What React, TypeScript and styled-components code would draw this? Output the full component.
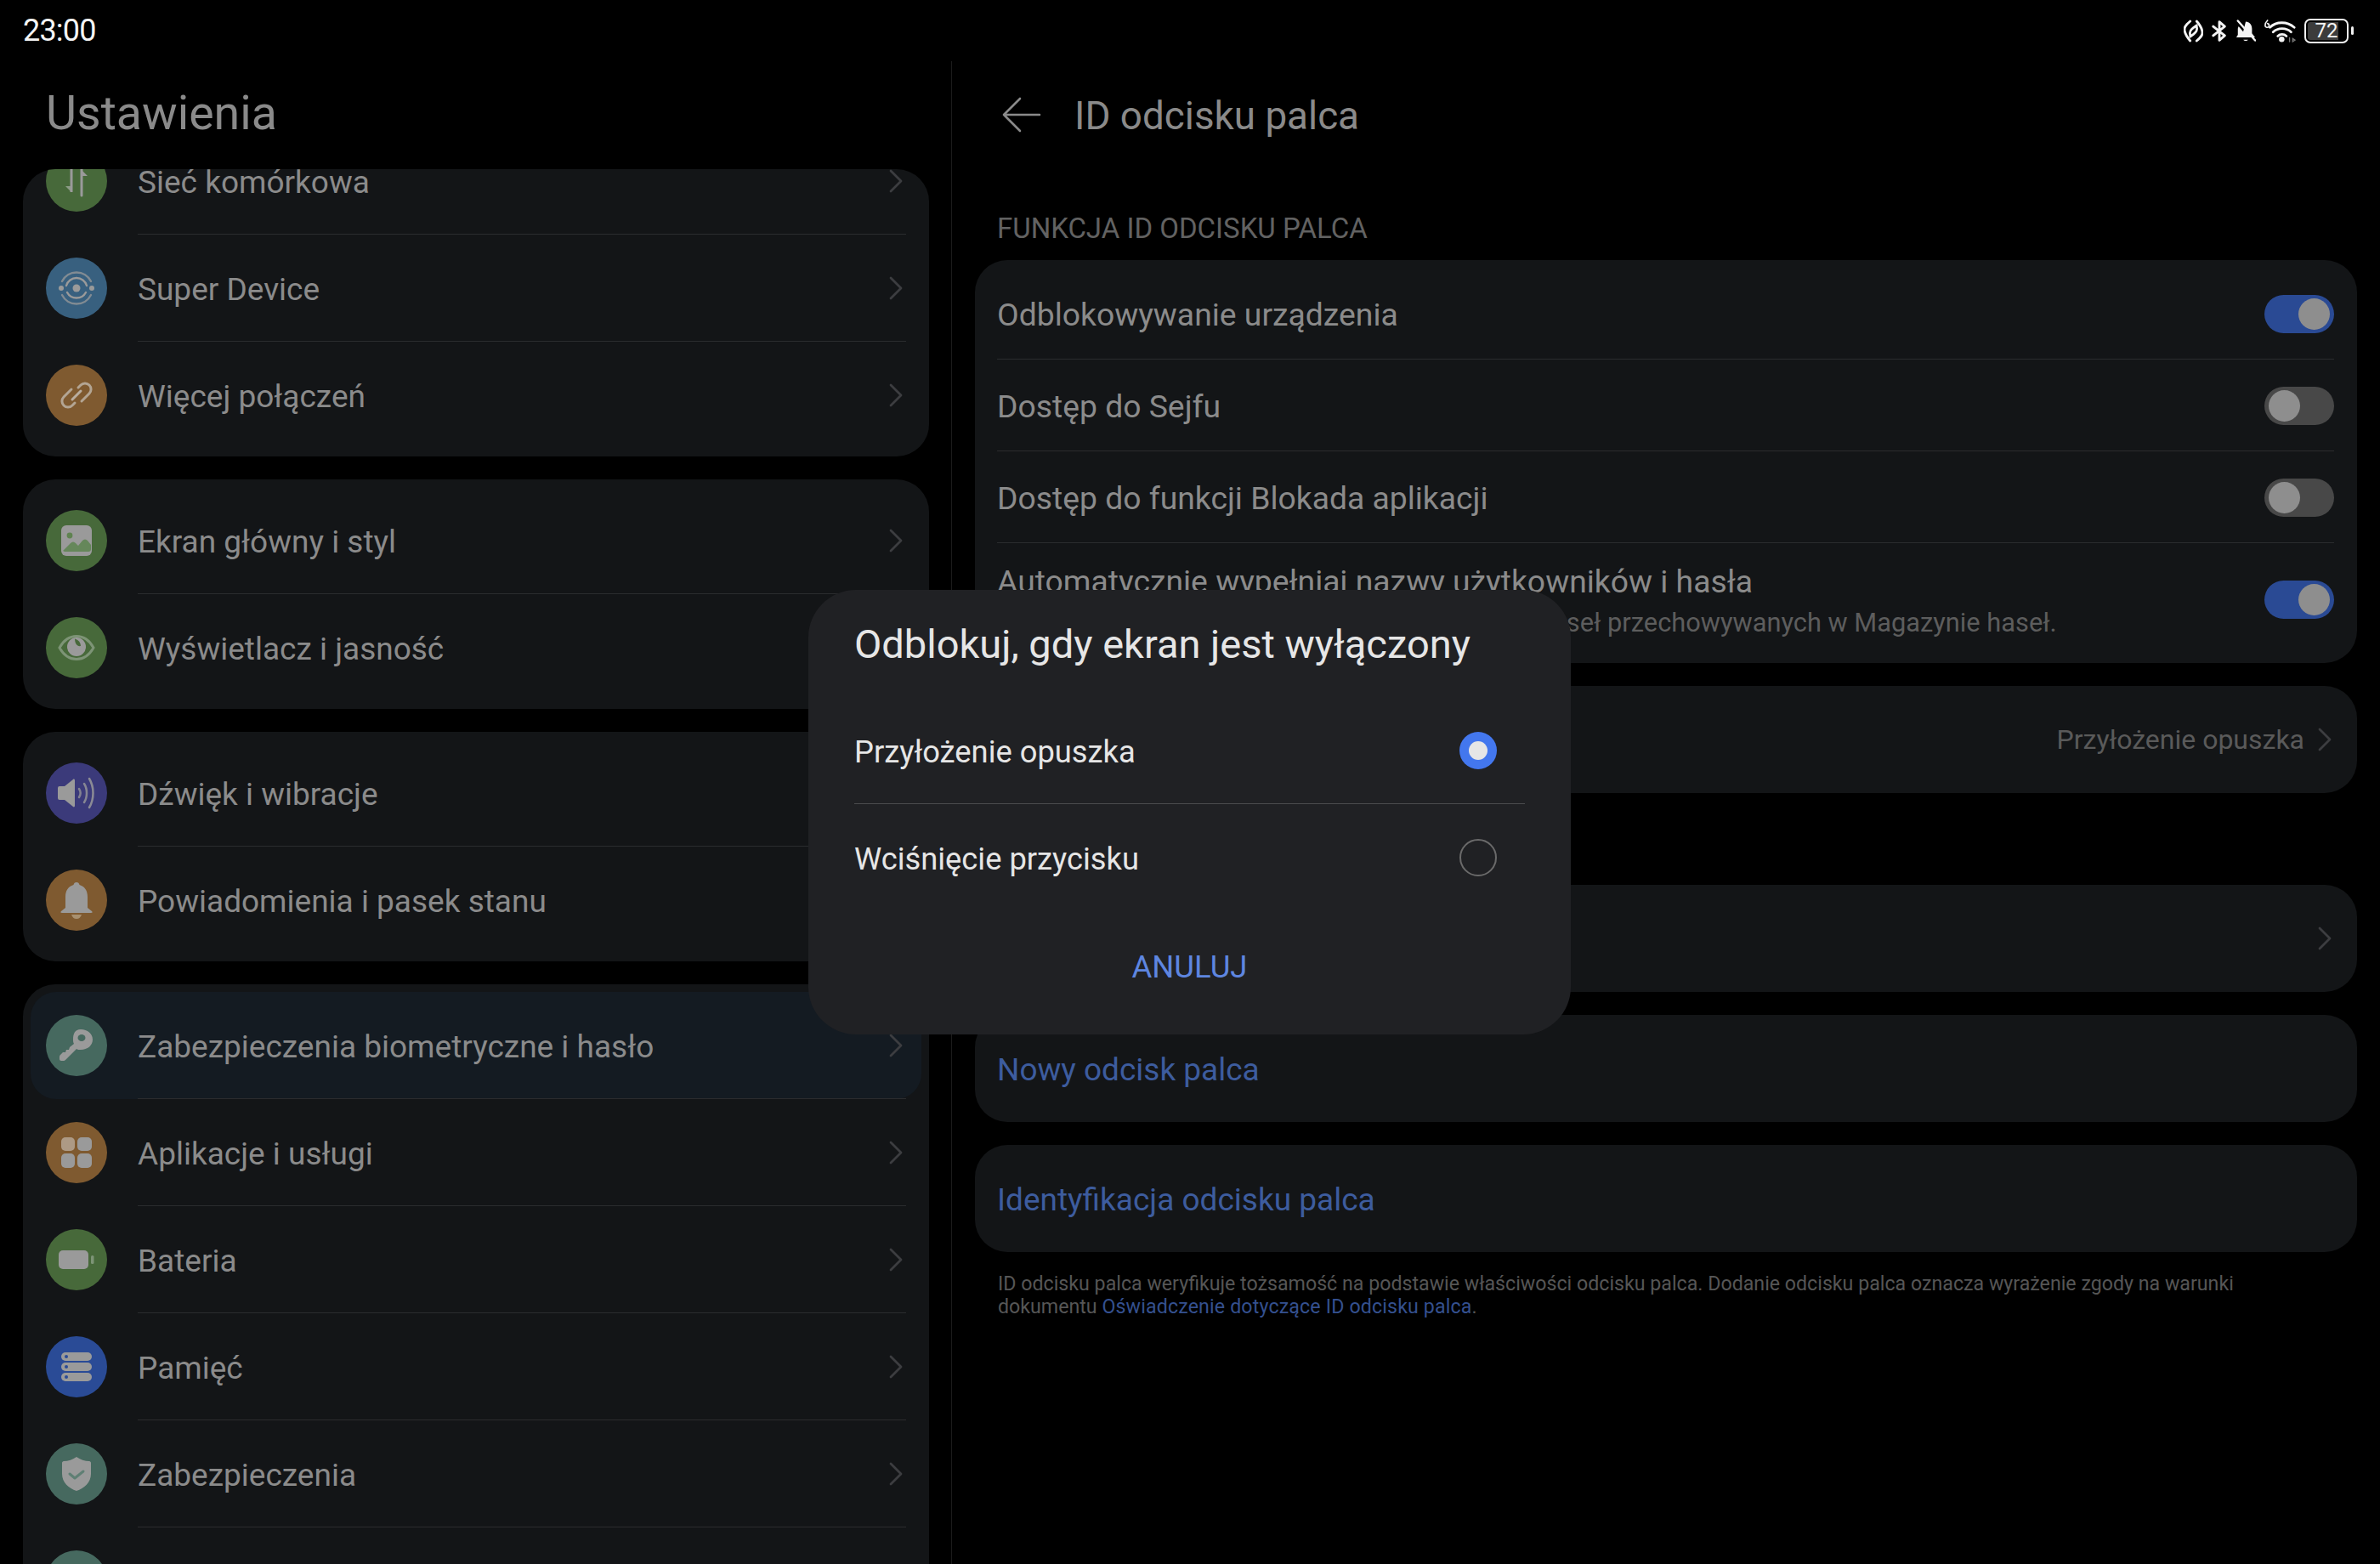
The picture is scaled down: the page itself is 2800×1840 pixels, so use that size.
import React from 'react'
import styled, { createGlobalStyle } from 'styled-components'

const GlobalStyle = createGlobalStyle`
  html, body {
    margin: 0;
    padding: 0;
    background: #000;
  }
  * {
    box-sizing: border-box;
  }
`

const Screen = styled.div`
  position: relative;
  width: 2800px;
  height: 1840px;
  overflow: hidden;
  background: #000;
  font-family: Roboto, "Noto Sans", "Liberation Sans", sans-serif;
`
const StatusBar = styled.div`
  display: flex;
  align-items: center;
  justify-content: space-between;
  height: 72px;
  padding: 0 27px;
`
const Clock = styled.span`
  color: #f4f4f4;
  font-size: 36px;
  letter-spacing: -0.8px;
`
const Panes = styled.div`
  display: flex;
  height: 1768px;
`
const LeftPane = styled.div`
  display: flex;
  flex-direction: column;
  width: 1120px;
  padding: 0 26px 0 27px;
  border-right: 1px solid #1c1c1c;
`
const LeftTitle = styled.div`
  display: flex;
  align-items: center;
  height: 127px;
  padding: 0 27px 4px;
  color: #8a8a8a;
  font-size: 55.5px;
`
const ScrollArea = styled.div`
  flex: 1;
  overflow: hidden;
  border-radius: 38px 38px 0 0;
`
const ScrollInner = styled.div`
  display: flex;
  flex-direction: column;
  gap: 27px;
  margin-top: -58px;
`
const MenuCard = styled.div`
  padding: 9px;
  border-radius: 38px;
  background: #131517;
`
const MenuRow = styled.div<{ $active?: boolean }>`
  display: flex;
  align-items: center;
  height: 126px;
  padding-left: 18px;
  border-radius: 30px;
  background: ${(p) => (p.$active ? '#141b22' : 'transparent')};
`
const IconDisc = styled.div<{ $color: string }>`
  display: flex;
  flex-shrink: 0;
  align-items: center;
  justify-content: center;
  width: 72px;
  height: 72px;
  border-radius: 50%;
  background: ${(p) => p.$color};
`
const MenuBody = styled.div<{ $last?: boolean }>`
  display: flex;
  flex: 1;
  align-items: center;
  justify-content: space-between;
  align-self: stretch;
  margin: 0 18px 0 36px;
  padding-right: 4px;
  border-bottom: ${(p) => (p.$last ? 'none' : '1px solid #2b2c2e')};
`
const MenuLabel = styled.span`
  padding-top: 3px;
  color: #8b8b8b;
  font-size: 37px;
`
const Chevron = styled.svg`
  display: block;
  flex-shrink: 0;
  width: 16px;
  height: 28px;
`
const RightPane = styled.div`
  display: flex;
  flex: 1;
  flex-direction: column;
  padding: 0 27px;
`
const Header = styled.div`
  display: flex;
  align-items: center;
  gap: 39px;
  height: 126px;
  padding-left: 32px;
`
const HeaderTitle = styled.span`
  padding-top: 2px;
  color: #8a8a8a;
  font-size: 45.8px;
`
const SectionLabel = styled.div`
  display: flex;
  align-items: center;
  height: 108px;
  padding: 32px 26px 0;
  color: #626262;
  font-size: 33px;
`
const Stack = styled.div`
  display: flex;
  flex-direction: column;
  gap: 27px;
`
const SettingsCard = styled.div<{ $gapTop?: number }>`
  padding: 9px 27px 9px 26px;
  border-radius: 38px;
  background: #131517;
  margin-top: ${(p) => p.$gapTop ?? 0}px;
`
const SettingRow = styled.div<{ $tall?: boolean; $last?: boolean }>`
  display: flex;
  align-items: center;
  justify-content: space-between;
  height: ${(p) => (p.$tall ? 132 : 108)}px;
  padding-top: 1px;
  border-bottom: ${(p) => (p.$last ? 'none' : '1px solid #2b2c2e')};
`
const PlainRow = styled.div`
  display: flex;
  align-items: center;
  justify-content: space-between;
  height: 108px;
`
const SettingText = styled.div`
  display: flex;
  flex-direction: column;
  gap: 8px;
`
const SettingLabel = styled.span`
  padding-top: 2px;
  color: #8b8b8b;
  font-size: 37.3px;
`
const SettingHint = styled.span`
  color: #5d5d5d;
  font-size: 30.8px;
`
const SettingValue = styled.div`
  display: flex;
  align-items: center;
  gap: 16px;
  margin-right: 3px;
  color: #5a5a5a;
  font-size: 32px;
`
const ActionLabel = styled.span`
  padding-top: 3px;
  color: #3d5c9e;
  font-size: 37px;
`
const Toggle = styled.div<{ $on?: boolean }>`
  display: flex;
  flex-shrink: 0;
  align-items: center;
  justify-content: ${(p) => (p.$on ? 'flex-end' : 'flex-start')};
  width: 82px;
  height: 45px;
  padding: 0 5px;
  border-radius: 23px;
  background: ${(p) => (p.$on ? '#2a4a94' : '#484848')};
`
const ToggleKnob = styled.div`
  width: 37px;
  height: 37px;
  border-radius: 50%;
  background: #8e8e8e;
`
const Footnote = styled.div`
  margin-top: 24px;
  padding: 0 26px 0 27px;
  color: #565656;
  font-size: 23.2px;
  line-height: 27px;
`
const FootLink = styled.span`
  color: #34508f;
  letter-spacing: 0.14px;
`
const Dialog = styled.div`
  position: absolute;
  top: 694px;
  left: 951px;
  display: flex;
  flex-direction: column;
  width: 897px;
  height: 523px;
  padding: 0 54px;
  border-radius: 56px;
  background: #202124;
`
const DialogTitle = styled.div`
  display: flex;
  align-items: center;
  height: 126px;
  color: #e6e6e6;
  font-size: 47px;
`
const DialogOption = styled.div<{ $last?: boolean }>`
  display: flex;
  align-items: center;
  justify-content: space-between;
  height: 126px;
  padding-top: 3px;
  padding-right: 33px;
  border-bottom: ${(p) => (p.$last ? 'none' : '1px solid #4a4b4d')};
  color: #e6e6e6;
  font-size: 36.3px;
`
const Radio = styled.div<{ $on?: boolean }>`
  display: flex;
  align-items: center;
  justify-content: center;
  width: 44px;
  height: 44px;
  margin-top: -3px;
  border-radius: 50%;
  border: ${(p) => (p.$on ? 'none' : '2px solid #6a6a6a')};
  background: ${(p) => (p.$on ? '#4377ee' : 'transparent')};
`
const RadioDot = styled.div`
  width: 22px;
  height: 22px;
  border-radius: 50%;
  background: #e6e6e6;
`
const CancelButton = styled.div`
  display: flex;
  align-items: center;
  justify-content: center;
  height: 130px;
  color: #5e86e0;
  font-size: 36.5px;
`
const StatusIcons = styled.div`
  display: flex;
  align-items: center;
  gap: 10px;
  margin-right: 4px;
`
const BatteryBox = styled.div`
  position: relative;
  display: flex;
  align-items: center;
  justify-content: center;
  width: 52px;
  height: 29px;
  overflow: hidden;
  border: 2px solid #f0f0f0;
  border-radius: 7px;
  color: #f4f4f4;
  font-size: 24px;
  line-height: 1;
`
const BatteryFill = styled.div`
  position: absolute;
  top: 2px;
  bottom: 2px;
  left: 2px;
  width: 36px;
  border-radius: 3px 0 0 3px;
  background: #3c3c3c;
`
const BatteryNumber = styled.span`
  position: relative;
`
const Battery = styled.div`
  display: flex;
  align-items: center;
  gap: 3px;
`
const BatteryTip = styled.div`
  width: 3px;
  height: 10px;
  border-radius: 2px;
  background: #f0f0f0;
`

const G = '#9a9a9a'

const ChevronIcon = () => (
  <Chevron viewBox="0 0 16 28" fill="none" stroke="#3c3d40" strokeWidth="2.8" strokeLinecap="round" strokeLinejoin="round">
    <path d="M2 2l12 12L2 26" />
  </Chevron>
)

const SignalGlyph = () => (
  <svg width="44" height="44" viewBox="0 0 44 44" fill="none">
    <path d="M16 5v30l-7-7h7z" fill="#8c9c86" />
    <path d="M16 4v31" stroke={G} strokeWidth="3" />
    <path d="M28 39V9l7 7h-7z" fill={G} />
    <path d="M28 8v31" stroke={G} strokeWidth="3" strokeLinecap="round" />
  </svg>
)
const SuperDeviceGlyph = () => (
  <svg width="44" height="44" viewBox="0 0 44 44" fill="none" stroke={G} strokeLinecap="round">
    <circle cx="22" cy="22" r="4.5" fill={G} stroke="none" />
    <circle cx="4" cy="22" r="3" fill={G} stroke="none" />
    <circle cx="40" cy="22" r="3" fill={G} stroke="none" />
    <path d="M10 19a12.5 12.5 0 0 1 24 0M33 27a12.5 12.5 0 0 1-22 0" strokeWidth="2.4" />
    <path d="M5 14a19 19 0 0 1 34 0M39 30a19 19 0 0 1-34 0" strokeWidth="2.4" opacity="0.75" />
  </svg>
)
const LinkGlyph = () => (
  <svg width="44" height="44" viewBox="0 0 44 44" fill="none" stroke="#b9ad9f" strokeWidth="3" strokeLinecap="round">
    <path d="M16 15l-9 9a7 7 0 0 0 10 10l3-3" opacity="0.9" />
    <path d="M28 29l9-9a7 7 0 0 0-10-10l-3 3" opacity="0.9" />
    <path d="M17 27l10-10" />
  </svg>
)
const PictureGlyph = () => (
  <svg width="38" height="38" viewBox="0 0 38 38">
    <rect x="1" y="1" width="36" height="36" rx="6" fill={G} />
    <circle cx="11" cy="13" r="3.4" fill="#5f8350" />
    <path d="M3 31l9-9c2-2 4-2 6 0l3 3 5-6c2-2 4-2 6 0l4 5v5a3 3 0 0 1-3 3H5z" fill="#65875a" />
  </svg>
)
const EyeGlyph = () => (
  <svg width="44" height="44" viewBox="0 0 44 44" fill="none">
    <path d="M2 22C7 13 14 8.500 22 8.500S37 13 42 22c-5 9-12 13.500-20 13.500S7 31 2 22z" stroke="#7d9476" strokeWidth="3" />
    <circle cx="22" cy="21" r="11" fill={G} />
    <path d="M20 11.500a9.500 9.500 0 0 1 7 8.500c-4 1-7-3-7-8.500z" fill="#47693a" />
  </svg>
)
const SoundGlyph = () => (
  <svg width="44" height="44" viewBox="0 0 44 44" fill="none">
    <path d="M0 16a2 2 0 0 1 2-2h6l10-8c1-1 2 0 2 1v30c0 1-1 2-2 1l-10-8H2a2 2 0 0 1-2-2z" fill={G} />
    <path d="M25 17c2 3 2 7 0 10" stroke={G} strokeWidth="2.5" strokeLinecap="round" opacity="0.75" />
    <path d="M31 11c4 6 4 16 0 22" stroke={G} strokeWidth="2.5" strokeLinecap="round" opacity="0.8" />
    <path d="M37 5c6 10 6 24 0 34" stroke={G} strokeWidth="2.5" strokeLinecap="round" opacity="0.85" />
  </svg>
)
const BellGlyph = () => (
  <svg width="38" height="44" viewBox="0 0 38 44">
    <path d="M19 1c2 0 3 1 3.500 3C29 6 32 11 32 18v13l5 4c1 1 1 2-1 2H2c-2 0-2-1-1-2l5-4V18C6 11 9 6 15.500 4 16 2 17 1 19 1z" fill={G} />
    <path d="M13 39h12c-1 3-3 5-6 5s-5-2-6-5z" fill="#a8906f" />
  </svg>
)
const KeyGlyph = () => (
  <svg width="40" height="40" viewBox="0 0 40 40">
    <path d="M25 1c8 0 14 5 14 12s-6 12-14 12c-2 0-4 0-5-1L7 37c-1 1-2 1-3 1H2c-1 0-2-1-2-2v-2c0-1 0-2 1-3l3-3h3l1-3h3l1-3 5-4c-1-2-1-3-1-5C16 6 18 1 25 1z" fill={G} />
    <ellipse cx="26" cy="11" rx="4.500" ry="4" fill="#46695f" />
  </svg>
)
const AppsGlyph = () => (
  <svg width="36" height="36" viewBox="0 0 36 36">
    <rect x="0" y="0" width="16" height="16" rx="5" fill="#ad9a85" />
    <rect x="19" y="0" width="17" height="16" rx="5" fill={G} />
    <rect x="0" y="19" width="16" height="17" rx="5" fill={G} />
    <rect x="19" y="19" width="17" height="17" rx="5" fill={G} />
  </svg>
)
const BatteryGlyph = () => (
  <svg width="42" height="22" viewBox="0 0 42 22">
    <rect x="0" y="0" width="35" height="22" rx="5" fill={G} />
    <rect x="38" y="6" width="3.500" height="10" rx="1.500" fill="#7d9476" />
  </svg>
)
const StorageGlyph = () => (
  <svg width="36" height="34" viewBox="0 0 36 34">
    {[0, 12, 24].map((y) => (
      <g key={y}>
        <rect x="0" y={y} width="36" height="10" rx="5" fill={G} />
        <circle cx="6" cy={y + 5} r="2" fill="#2a4b96" />
      </g>
    ))}
  </svg>
)
const ShieldGlyph = () => (
  <svg width="34" height="40" viewBox="0 0 34 40" fill="none">
    <path d="M17 0c4 3 10 5 15 5 1 0 2 1 2 2v13c0 10-8 17-17 20C8 37 0 30 0 20V7c0-1 1-2 2-2 5 0 11-2 15-5z" fill={G} />
    <path d="M9 20l6 5 10-8" stroke="#5f7f74" strokeWidth="3" strokeLinecap="round" strokeLinejoin="round" />
  </svg>
)

type MenuItem = { label: string; color: string; glyph?: React.ReactNode; active?: boolean }

const menu: MenuItem[][] = [
  [
    { label: 'Sieć komórkowa', color: '#47693a', glyph: <SignalGlyph /> },
    { label: 'Super Device', color: '#38607f', glyph: <SuperDeviceGlyph /> },
    { label: 'Więcej połączeń', color: '#7f5a30', glyph: <LinkGlyph /> },
  ],
  [
    { label: 'Ekran główny i styl', color: '#47693a', glyph: <PictureGlyph /> },
    { label: 'Wyświetlacz i jasność', color: '#47693a', glyph: <EyeGlyph /> },
  ],
  [
    { label: 'Dźwięk i wibracje', color: '#3b3a7a', glyph: <SoundGlyph /> },
    { label: 'Powiadomienia i pasek stanu', color: '#7f5a30', glyph: <BellGlyph /> },
  ],
  [
    { label: 'Zabezpieczenia biometryczne i hasło', color: '#46695f', glyph: <KeyGlyph />, active: true },
    { label: 'Aplikacje i usługi', color: '#7f5a30', glyph: <AppsGlyph /> },
    { label: 'Bateria', color: '#47693a', glyph: <BatteryGlyph /> },
    { label: 'Pamięć', color: '#2a4b96', glyph: <StorageGlyph /> },
    { label: 'Zabezpieczenia', color: '#46695f', glyph: <ShieldGlyph /> },
    { label: '', color: '#46695f' },
  ],
]

const StatusGlyphs = () => (
  <>
    <svg width="23" height="27" viewBox="0 0 24 28" fill="none" stroke="#f4f4f4" strokeWidth="3" strokeLinecap="round">
      <path d="M8 2C2 7 0 10 1.500 15c1 4 3 7 6.500 11" />
      <path d="M16 26c6-5 8-8 6.500-13-1-4-3-7-6.500-11" />
      <path d="M8 19c-1-4 0-6 4-9l4-3M16 9c1 4 0 6-4 9l-4 3" />
    </svg>
    <svg width="18" height="27" viewBox="0 0 20 28" fill="none" stroke="#f4f4f4" strokeWidth="3.2" strokeLinejoin="round" strokeLinecap="round">
      <path d="M2 8l15 12-7 6V2l7 6L2 20" />
    </svg>
    <svg width="24" height="27" viewBox="0 0 26 28" fill="none">
      <path d="M13 2c5 0 8 4 8 9v6l4 5H8zM3 11c0-1 .5-2 1-3l12 14H1l2-3z" fill="#f4f4f4" />
      <path d="M10 25h6c-1 2-5 2-6 0z" fill="#f4f4f4" />
      <path d="M3 1l22 25" stroke="#f4f4f4" strokeWidth="2.6" strokeLinecap="round" />
    </svg>
    <svg width="37" height="28" viewBox="0 0 40 30" fill="none" stroke="#f4f4f4" strokeLinecap="round">
      <path d="M7 11C15 3 29 3 38 11" strokeWidth="3" />
      <path d="M11 17c6-6 17-6 23 0" strokeWidth="3" />
      <path d="M17 22c3-3 8-3 11 0" strokeWidth="3" />
      <circle cx="22" cy="26" r="3.500" fill="#f4f4f4" stroke="none" />
      <path d="M32 24v5M36 25l3 2-3 2z" stroke="#777" strokeWidth="1.5" />
      <path d="M4 2C2 4 1 6 1 8a2.500 2.500 0 1 0 3-2" strokeWidth="1.800" />
    </svg>
  </>
)

export default function App() {
  return (
    <Screen>
      <GlobalStyle />
      <StatusBar>
        <Clock>23:00</Clock>
        <StatusIcons>
          <StatusGlyphs />
          <Battery>
            <BatteryBox>
              <BatteryFill />
              <BatteryNumber>72</BatteryNumber>
            </BatteryBox>
            <BatteryTip />
          </Battery>
        </StatusIcons>
      </StatusBar>
      <Panes>
        <LeftPane>
          <LeftTitle>Ustawienia</LeftTitle>
          <ScrollArea>
            <ScrollInner>
              {menu.map((group, i) => (
                <MenuCard key={i}>
                  {group.map((item, j) => (
                    <MenuRow key={item.label} $active={item.active}>
                      <IconDisc $color={item.color}>{item.glyph}</IconDisc>
                      <MenuBody $last={j === group.length - 1}>
                        <MenuLabel>{item.label}</MenuLabel>
                        {item.label && <ChevronIcon />}
                      </MenuBody>
                    </MenuRow>
                  ))}
                </MenuCard>
              ))}
            </ScrollInner>
          </ScrollArea>
        </LeftPane>
        <RightPane>
          <Header>
            <svg width="46" height="42" viewBox="0 0 46 42" fill="none" stroke="#8a8a8a" strokeWidth="2.6" strokeLinecap="round" strokeLinejoin="round">
              <path d="M21 2L2 21l19 19M2 21h42" />
            </svg>
            <HeaderTitle>ID odcisku palca</HeaderTitle>
          </Header>
          <SectionLabel>FUNKCJA ID ODCISKU PALCA</SectionLabel>
          <Stack>
            <SettingsCard>
              <SettingRow>
                <SettingLabel>Odblokowywanie urządzenia</SettingLabel>
                <Toggle $on><ToggleKnob /></Toggle>
              </SettingRow>
              <SettingRow>
                <SettingLabel>Dostęp do Sejfu</SettingLabel>
                <Toggle><ToggleKnob /></Toggle>
              </SettingRow>
              <SettingRow>
                <SettingLabel>Dostęp do funkcji Blokada aplikacji</SettingLabel>
                <Toggle><ToggleKnob /></Toggle>
              </SettingRow>
              <SettingRow $tall $last>
                <SettingText>
                  <SettingLabel>Automatycznie wypełniaj nazwy użytkowników i hasła</SettingLabel>
                  <SettingHint>Użyj odcisków palca do logowania za pomocą haseł przechowywanych w Magazynie haseł.</SettingHint>
                </SettingText>
                <Toggle $on><ToggleKnob /></Toggle>
              </SettingRow>
            </SettingsCard>
            <SettingsCard>
              <PlainRow>
                <SettingLabel>Odblokuj, gdy ekran jest wyłączony</SettingLabel>
                <SettingValue>
                  Przyłożenie opuszka
                  <ChevronIcon />
                </SettingValue>
              </PlainRow>
            </SettingsCard>
          </Stack>
          <Stack>
            <SettingsCard $gapTop={108}>
              <PlainRow>
                <span />
                <SettingValue>
                  <ChevronIcon />
                </SettingValue>
              </PlainRow>
            </SettingsCard>
            <SettingsCard>
              <PlainRow>
                <ActionLabel>Nowy odcisk palca</ActionLabel>
              </PlainRow>
            </SettingsCard>
            <SettingsCard>
              <PlainRow>
                <ActionLabel>Identyfikacja odcisku palca</ActionLabel>
              </PlainRow>
            </SettingsCard>
          </Stack>
          <Footnote>
            ID odcisku palca weryfikuje tożsamość na podstawie właściwości odcisku palca. Dodanie odcisku palca oznacza wyrażenie zgody na warunki dokumentu{' '}
            <FootLink>Oświadczenie dotyczące ID odcisku palca</FootLink>.
          </Footnote>
        </RightPane>
      </Panes>
      <Dialog>
        <DialogTitle>Odblokuj, gdy ekran jest wyłączony</DialogTitle>
        <DialogOption>
          Przyłożenie opuszka
          <Radio $on><RadioDot /></Radio>
        </DialogOption>
        <DialogOption $last>
          Wciśnięcie przycisku
          <Radio />
        </DialogOption>
        <CancelButton>ANULUJ</CancelButton>
      </Dialog>
    </Screen>
  )
}
